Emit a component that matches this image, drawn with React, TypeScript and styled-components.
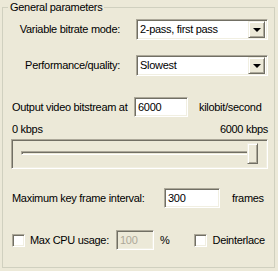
import styled, { createGlobalStyle } from "styled-components";

const GlobalStyle = createGlobalStyle`
  html, body {
    margin: 0;
    background: #ece9d8;
  }
  body {
    font-family: "Liberation Sans", Arial, sans-serif;
    font-size: 11px;
    letter-spacing: -0.3px;
    color: #000;
  }
`;

const sunken = `
  box-sizing: border-box;
  border: 1px solid;
  border-color: #aca899 #ffffff #ffffff #aca899;
  box-shadow: inset 1px 1px #716f64, inset -1px -1px #f1efe2;
`;

const raised = `
  box-sizing: border-box;
  border: 1px solid;
  border-color: #f1efe2 #716f64 #716f64 #f1efe2;
  box-shadow: inset 1px 1px #ffffff, inset -1px -1px #aca899;
  background: #ece9d8;
`;

const Window = styled.div`
  width: 278px;
  height: 271px;
  overflow: hidden;
`;

const Group = styled.section`
  position: relative;
  box-sizing: border-box;
  margin: 7px 0 0 2px;
  width: 273px;
  height: 261px;
  border: 1px solid #d0d0bf;
  display: flex;
  flex-direction: column;
`;

const Legend = styled.span`
  position: absolute;
  top: -8px;
  left: 5px;
  padding: 0 2px;
  line-height: 14px;
  background: #ece9d8;
`;

const Row = styled.div<{ $top: number; $left?: number; $h?: number }>`
  display: flex;
  align-items: center;
  margin-top: ${(p) => p.$top}px;
  padding-left: ${(p) => p.$left ?? 0}px;
  height: ${(p) => p.$h ?? 20}px;
  white-space: nowrap;
`;

const Label = styled.span<{ $w?: number; $right?: boolean; $gap?: number }>`
  display: inline-block;
  width: ${(p) => (p.$w ? `${p.$w}px` : "auto")};
  text-align: ${(p) => (p.$right ? "right" : "left")};
  margin-left: ${(p) => p.$gap ?? 0}px;
  line-height: 13px;
  flex-shrink: 0;
`;

const Combo = styled.div<{ $gap: number; $w: number }>`
  ${sunken}
  display: flex;
  align-items: center;
  margin-left: ${(p) => p.$gap}px;
  width: ${(p) => p.$w}px;
  height: 21px;
  padding: 2px;
  background: #fff;
`;

const ComboText = styled.span`
  flex: 1;
  padding-left: 1px;
  line-height: 13px;
`;

const DropButton = styled.span`
  ${raised}
  display: flex;
  align-items: center;
  justify-content: center;
  width: 17px;
  height: 17px;
`;

const Arrow = styled.span`
  width: 0;
  height: 0;
  border-left: 4px solid transparent;
  border-right: 4px solid transparent;
  border-top: 4px solid #000;
  margin-top: 1px;
`;

const TextBox = styled.div<{ $gap: number; $w: number; $h?: number; $disabled?: boolean }>`
  ${sunken}
  margin-left: ${(p) => p.$gap}px;
  width: ${(p) => p.$w}px;
  height: ${(p) => p.$h ?? 20}px;
  padding: 3px 3px 0;
  line-height: 13px;
  background: ${(p) => (p.$disabled ? "#ece9d8" : "#fff")};
  color: ${(p) => (p.$disabled ? "#aca899" : "#000")};
`;

const Scale = styled.div`
  display: flex;
  justify-content: space-between;
  margin: 6px 0 0 9px;
  width: 256px;
  line-height: 13px;
`;

const SliderWell = styled.div`
  ${sunken}
  margin: 3px 0 0 8px;
  width: 257px;
  height: 30px;
  padding: 3px 9px 0 9px;
`;

const Rail = styled.div`
  position: relative;
  height: 21px;
  display: flex;
  align-items: center;
`;

const Track = styled.div`
  box-sizing: border-box;
  width: 100%;
  height: 4px;
  margin-top: -2px;
  border: 1px solid;
  border-color: #aca899 #ffffff #ffffff #aca899;
  box-shadow: inset 1px 1px #716f64;
`;

const Thumb = styled.div`
  ${raised}
  position: absolute;
  top: 0;
  width: 11px;
  height: 21px;
`;

const Check = styled.span<{ $gap?: number }>`
  ${sunken}
  display: inline-block;
  width: 13px;
  height: 13px;
  margin-left: ${(p) => p.$gap ?? 0}px;
  background: #fff;
  flex-shrink: 0;
`;

const bitrate = { value: 6000, max: 6000 };

export default function App() {
  const railWidth = 257 - 2 - 18;
  const thumbLeft = Math.round((bitrate.value / bitrate.max) * (railWidth - 11));

  return (
    <Window>
      <GlobalStyle />
      <Group>
        <Legend>General parameters</Legend>

        <Row $top={11} $h={21}>
          <Label $w={117} $right>
            Variable bitrate mode:
          </Label>
          <Combo $gap={16} $w={132}>
            <ComboText>2-pass, first pass</ComboText>
            <DropButton>
              <Arrow />
            </DropButton>
          </Combo>
        </Row>

        <Row $top={15} $h={21}>
          <Label $w={117} $right>
            Performance/quality:
          </Label>
          <Combo $gap={16} $w={132}>
            <ComboText>Slowest</ComboText>
            <DropButton>
              <Arrow />
            </DropButton>
          </Combo>
        </Row>

        <Row $top={21} $left={9}>
          <Label $w={122}>Output video bitstream at</Label>
          <TextBox $gap={0} $w={54}>
            {bitrate.value}
          </TextBox>
          <Label $gap={11}>kilobit/second</Label>
        </Row>

        <Scale>
          <span>0 kbps</span>
          <span>{bitrate.max} kbps</span>
        </Scale>

        <SliderWell>
          <Rail>
            <Track />
            <Thumb style={{ left: thumbLeft }} />
          </Rail>
        </SliderWell>

        <Row $top={19} $left={9}>
          <Label $w={152}>Maximum key frame interval:</Label>
          <TextBox $gap={0} $w={56} $h={20}>
            300
          </TextBox>
          <Label $gap={12}>frames</Label>
        </Row>

        <Row $top={22} $left={9}>
          <Check />
          <Label $w={86} $gap={5}>
            Max CPU usage:
          </Label>
          <TextBox $gap={0} $w={38} $disabled>
            100
          </TextBox>
          <Label $gap={6}>%</Label>
          <Check $gap={25} />
          <Label $gap={5}>Deinterlace</Label>
        </Row>
      </Group>
    </Window>
  );
}
